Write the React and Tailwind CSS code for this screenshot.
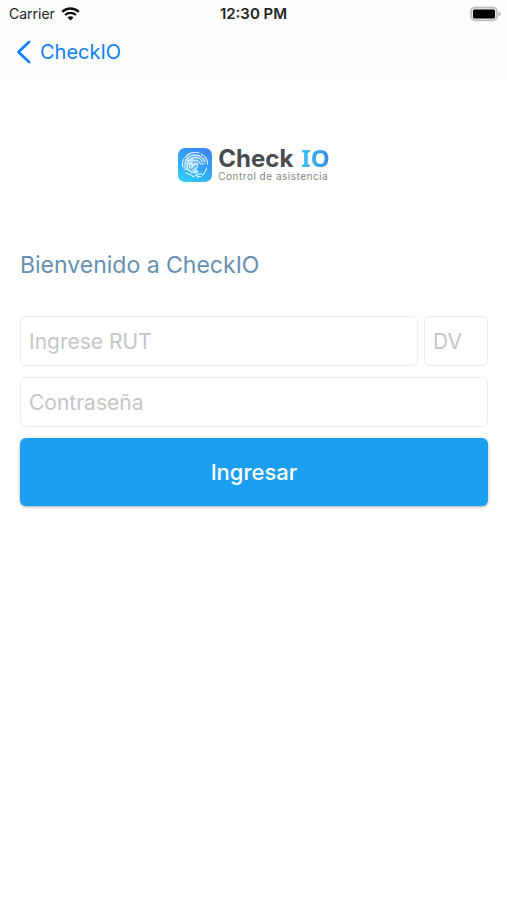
function StatusBar() {
  return (
    <div className="grid h-7 grid-cols-3 items-center px-[5px] text-[14px] leading-5 text-[#222]">
      <div className="flex items-center gap-[6px] pl-1">
        <span>Carrier</span>
        <svg width="19" height="14" viewBox="0 0 19 14" fill="none" aria-label="Wi-Fi">
          <path d="M1.2 4.9C6 .4 13 .4 17.8 4.9" stroke="#111" strokeWidth="2.5" />
          <path d="M4.1 8C7.2 5.2 11.8 5.2 14.9 8" stroke="#111" strokeWidth="2.3" />
          <path d="M6.5 10.4C8.2 9 10.8 9 12.5 10.4L9.5 13.6Z" fill="#111" />
        </svg>
      </div>
      <span className="text-center text-[15px] font-semibold">12:30 PM</span>
      <svg className="justify-self-end" width="32" height="16" viewBox="0 0 32 16" fill="none" aria-label="Battery">
        <rect x="1" y="1.5" width="26" height="13" rx="4" fill="#e4e4e4" stroke="#bcbcbc" strokeWidth="1.6" />
        <rect x="3" y="3.5" width="22" height="9" rx="1.5" fill="#000" />
        <path d="M28.5 5.5C31.5 6.3 31.5 9.7 28.5 10.5Z" fill="#b5b5b5" />
      </svg>
    </div>
  );
}

function LogoMark() {
  return (
    <svg width="34" height="34" viewBox="0 0 34 34" fill="none" aria-hidden="true">
      <defs>
        <linearGradient id="mark" x1="26" y1="0" x2="8" y2="34" gradientUnits="userSpaceOnUse">
          <stop stopColor="#3c86f2" />
          <stop offset=".5" stopColor="#35a5f5" />
          <stop offset="1" stopColor="#2fcdfb" />
        </linearGradient>
      </defs>
      <rect width="34" height="34" rx="7" fill="url(#mark)" />
      <path d="M6 12C9 6 18 4 23 8L19 12L22 16L17 18L20 24L14 25L8 21Z" fill="#fff" opacity=".25" />
      <g stroke="#fff" strokeWidth="1.1" strokeLinecap="round" opacity=".85">
        <path d="M7 9.5C10 5 16 3.2 21 5" />
        <path d="M23 6C27 8 29.5 12 29.5 16" />
        <path d="M5 19C4 15.5 4.5 13 6 11" />
        <path d="M7 20C6 13 10 7.5 16 7C21 6.6 25.5 9.5 27 14" />
        <path d="M9.5 21C8 15 11.5 10 16.5 9.5C20 9.2 23 11 24.5 14" />
        <path d="M9 12L12 13L15 11M10 16L13 15L15 18L19 16" />
        <path d="M12 20C10.5 16 13 12.5 17 12.2C19.5 12 21.5 13.5 22.5 16H26" />
        <path d="M14 20C13 17 15 15 17 15C19 15 20 17 19.5 19L17 21L20 24" />
        <path d="M6 21L11 22L14 25L18 24M8 25L13 27L16 29" />
        <path d="M15 22L19 26L24 26M19 29L23 28.5M17 27L20 28" />
        <path d="M28.5 20C28 23 26.5 25.5 24.5 27" />
      </g>
    </svg>
  );
}

function Logo() {
  return (
    <div className="flex items-center justify-center gap-[6px]">
      <LogoMark />
      <div className="flex flex-col">
        <div className="flex items-baseline gap-2 text-[24px] font-bold leading-[22px]">
          <span className="text-[#4b4b4d]">Check</span>
          <span className="bg-linear-to-r from-[#3cc5f5] to-[#368cec] bg-clip-text font-['Noto_Sans',sans-serif] text-transparent">
            IO
          </span>
        </div>
        <span className="text-[10px] leading-3 tracking-wider text-[#858585]">
          Control de asistencia
        </span>
      </div>
    </div>
  );
}

const field =
  "h-[50px] min-w-0 rounded-md border border-[#ececec] bg-white px-2 text-[21px] text-[#333] outline-none placeholder:text-[#c5c5c7] focus:border-[#1d9ff1]";

export default function App() {
  return (
    <div className="min-h-screen bg-white font-[Inter,sans-serif]">
      <header className="bg-[#fdfdfd]">
        <StatusBar />
        <nav className="flex h-[52px] items-start px-4 pt-3">
          <a href="#" className="flex items-center gap-[9px] text-[20px] leading-6 text-[#1180f5]">
            <svg width="15" height="24" viewBox="0 0 15 24" fill="none" aria-hidden="true">
              <path d="M13 2L2.5 12L13 22" stroke="currentColor" strokeWidth="2.8" strokeLinecap="round" strokeLinejoin="round" />
            </svg>
            CheckIO
          </a>
        </nav>
      </header>
      <main className="pl-5 pr-[19px] pt-[67px]">
        <Logo />
        <h1 className="mt-[67px] text-[23px] leading-8 text-[#6690b3]">Bienvenido a CheckIO</h1>
        <form className="mt-[35px] flex flex-col gap-[11px]" onSubmit={(e) => e.preventDefault()}>
          <div className="flex gap-[6px]">
            <input className={`${field} flex-1`} aria-label="RUT" placeholder="Ingrese RUT" />
            <input className={`${field} w-16`} aria-label="Dígito verificador" placeholder="DV" />
          </div>
          <input className={field} type="password" aria-label="Contraseña" placeholder="Contraseña" />
          <button
            type="submit"
            className="h-[68px] rounded-md bg-[#1d9ff1] text-[22px] font-medium text-white shadow-[0_1px_3px_rgba(0,0,0,0.35)]"
          >
            Ingresar
          </button>
        </form>
      </main>
    </div>
  );
}
